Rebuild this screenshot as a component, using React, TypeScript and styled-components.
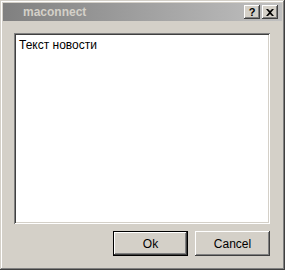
import React from "react";
import styled, { createGlobalStyle } from "styled-components";

const Global = createGlobalStyle`
  html, body { margin: 0; padding: 0; background: #d4d0c8; }
  * { box-sizing: border-box; }
`;

const Window = styled.div`
  width: 285px;
  height: 270px;
  background: #d4d0c8;
  padding: 3px;
  display: flex;
  flex-direction: column;
  box-shadow: inset -1px -1px #404040, inset 1px 1px #d4d0c8,
    inset -2px -2px #808080, inset 2px 2px #ffffff;
  font-family: "Liberation Sans", Arial, sans-serif;
`;

const TitleBar = styled.div`
  height: 18px;
  flex: none;
  display: flex;
  align-items: center;
  padding-left: 20px;
  padding-right: 4px;
  background: linear-gradient(to right, #808080, #c0c0c0);
`;

const Title = styled.span`
  color: #d4d0c8;
  font-family: "Liberation Sans", Arial, sans-serif;
  font-weight: bold;
  font-size: 12px;
`;

const CaptionButtons = styled.div`
  margin-left: auto;
  display: flex;
  gap: 2px;
`;

const CaptionButton = styled.div`
  width: 16px;
  height: 14px;
  background: #d4d0c8;
  display: flex;
  align-items: center;
  justify-content: center;
  box-shadow: inset -1px -1px #404040, inset 1px 1px #ffffff,
    inset -2px -2px #808080, inset 2px 2px #d4d0c8;
  font-family: "Liberation Sans", Arial, sans-serif;
  font-weight: bold;
  font-size: 11px;
  color: #000;
  line-height: 1;
`;

const Body = styled.div`
  flex: 1;
  display: flex;
  flex-direction: column;
  padding: 12px 12px 11px 11px;
`;

const TextArea = styled.div`
  flex: 1;
  background: #fff;
  box-shadow: inset 1px 1px #808080, inset -1px -1px #ffffff,
    inset 2px 2px #404040, inset -2px -2px #d4d0c8;
  padding: 6px 5px;
  font-family: "Liberation Sans", Arial, sans-serif;
  font-size: 12px;
  line-height: 13px;
  color: #000;
`;

const ButtonRow = styled.div`
  display: flex;
  justify-content: flex-end;
  gap: 7px;
  margin-top: 7px;
`;

const Button = styled.div<{ $default?: boolean }>`
  width: 75px;
  height: 25px;
  display: flex;
  align-items: center;
  justify-content: center;
  background: #d4d0c8;
  font-family: "Liberation Sans", Arial, sans-serif;
  font-size: 12px;
  color: #000;
  box-shadow: ${(p) =>
    p.$default
      ? "inset 0 0 0 1px #000, inset -2px -2px #404040, inset 2px 2px #ffffff, inset -3px -3px #808080"
      : "inset -1px -1px #404040, inset 1px 1px #ffffff, inset -2px -2px #808080, inset 2px 2px #d4d0c8"};
`;

export default function App() {
  return (
    <>
      <Global />
      <Window>
        <TitleBar>
          <Title>maconnect</Title>
          <CaptionButtons>
            <CaptionButton>?</CaptionButton>
            <CaptionButton>
              <svg width="8" height="7" viewBox="0 0 8 7">
                <path d="M0 0h2l2 2 2-2h2L5 3.5 8 7H6L4 5 2 7H0l3-3.5z" fill="#000" />
              </svg>
            </CaptionButton>
          </CaptionButtons>
        </TitleBar>
        <Body>
          <TextArea>Текст новости</TextArea>
          <ButtonRow>
            <Button $default>Ok</Button>
            <Button>Cancel</Button>
          </ButtonRow>
        </Body>
      </Window>
    </>
  );
}
